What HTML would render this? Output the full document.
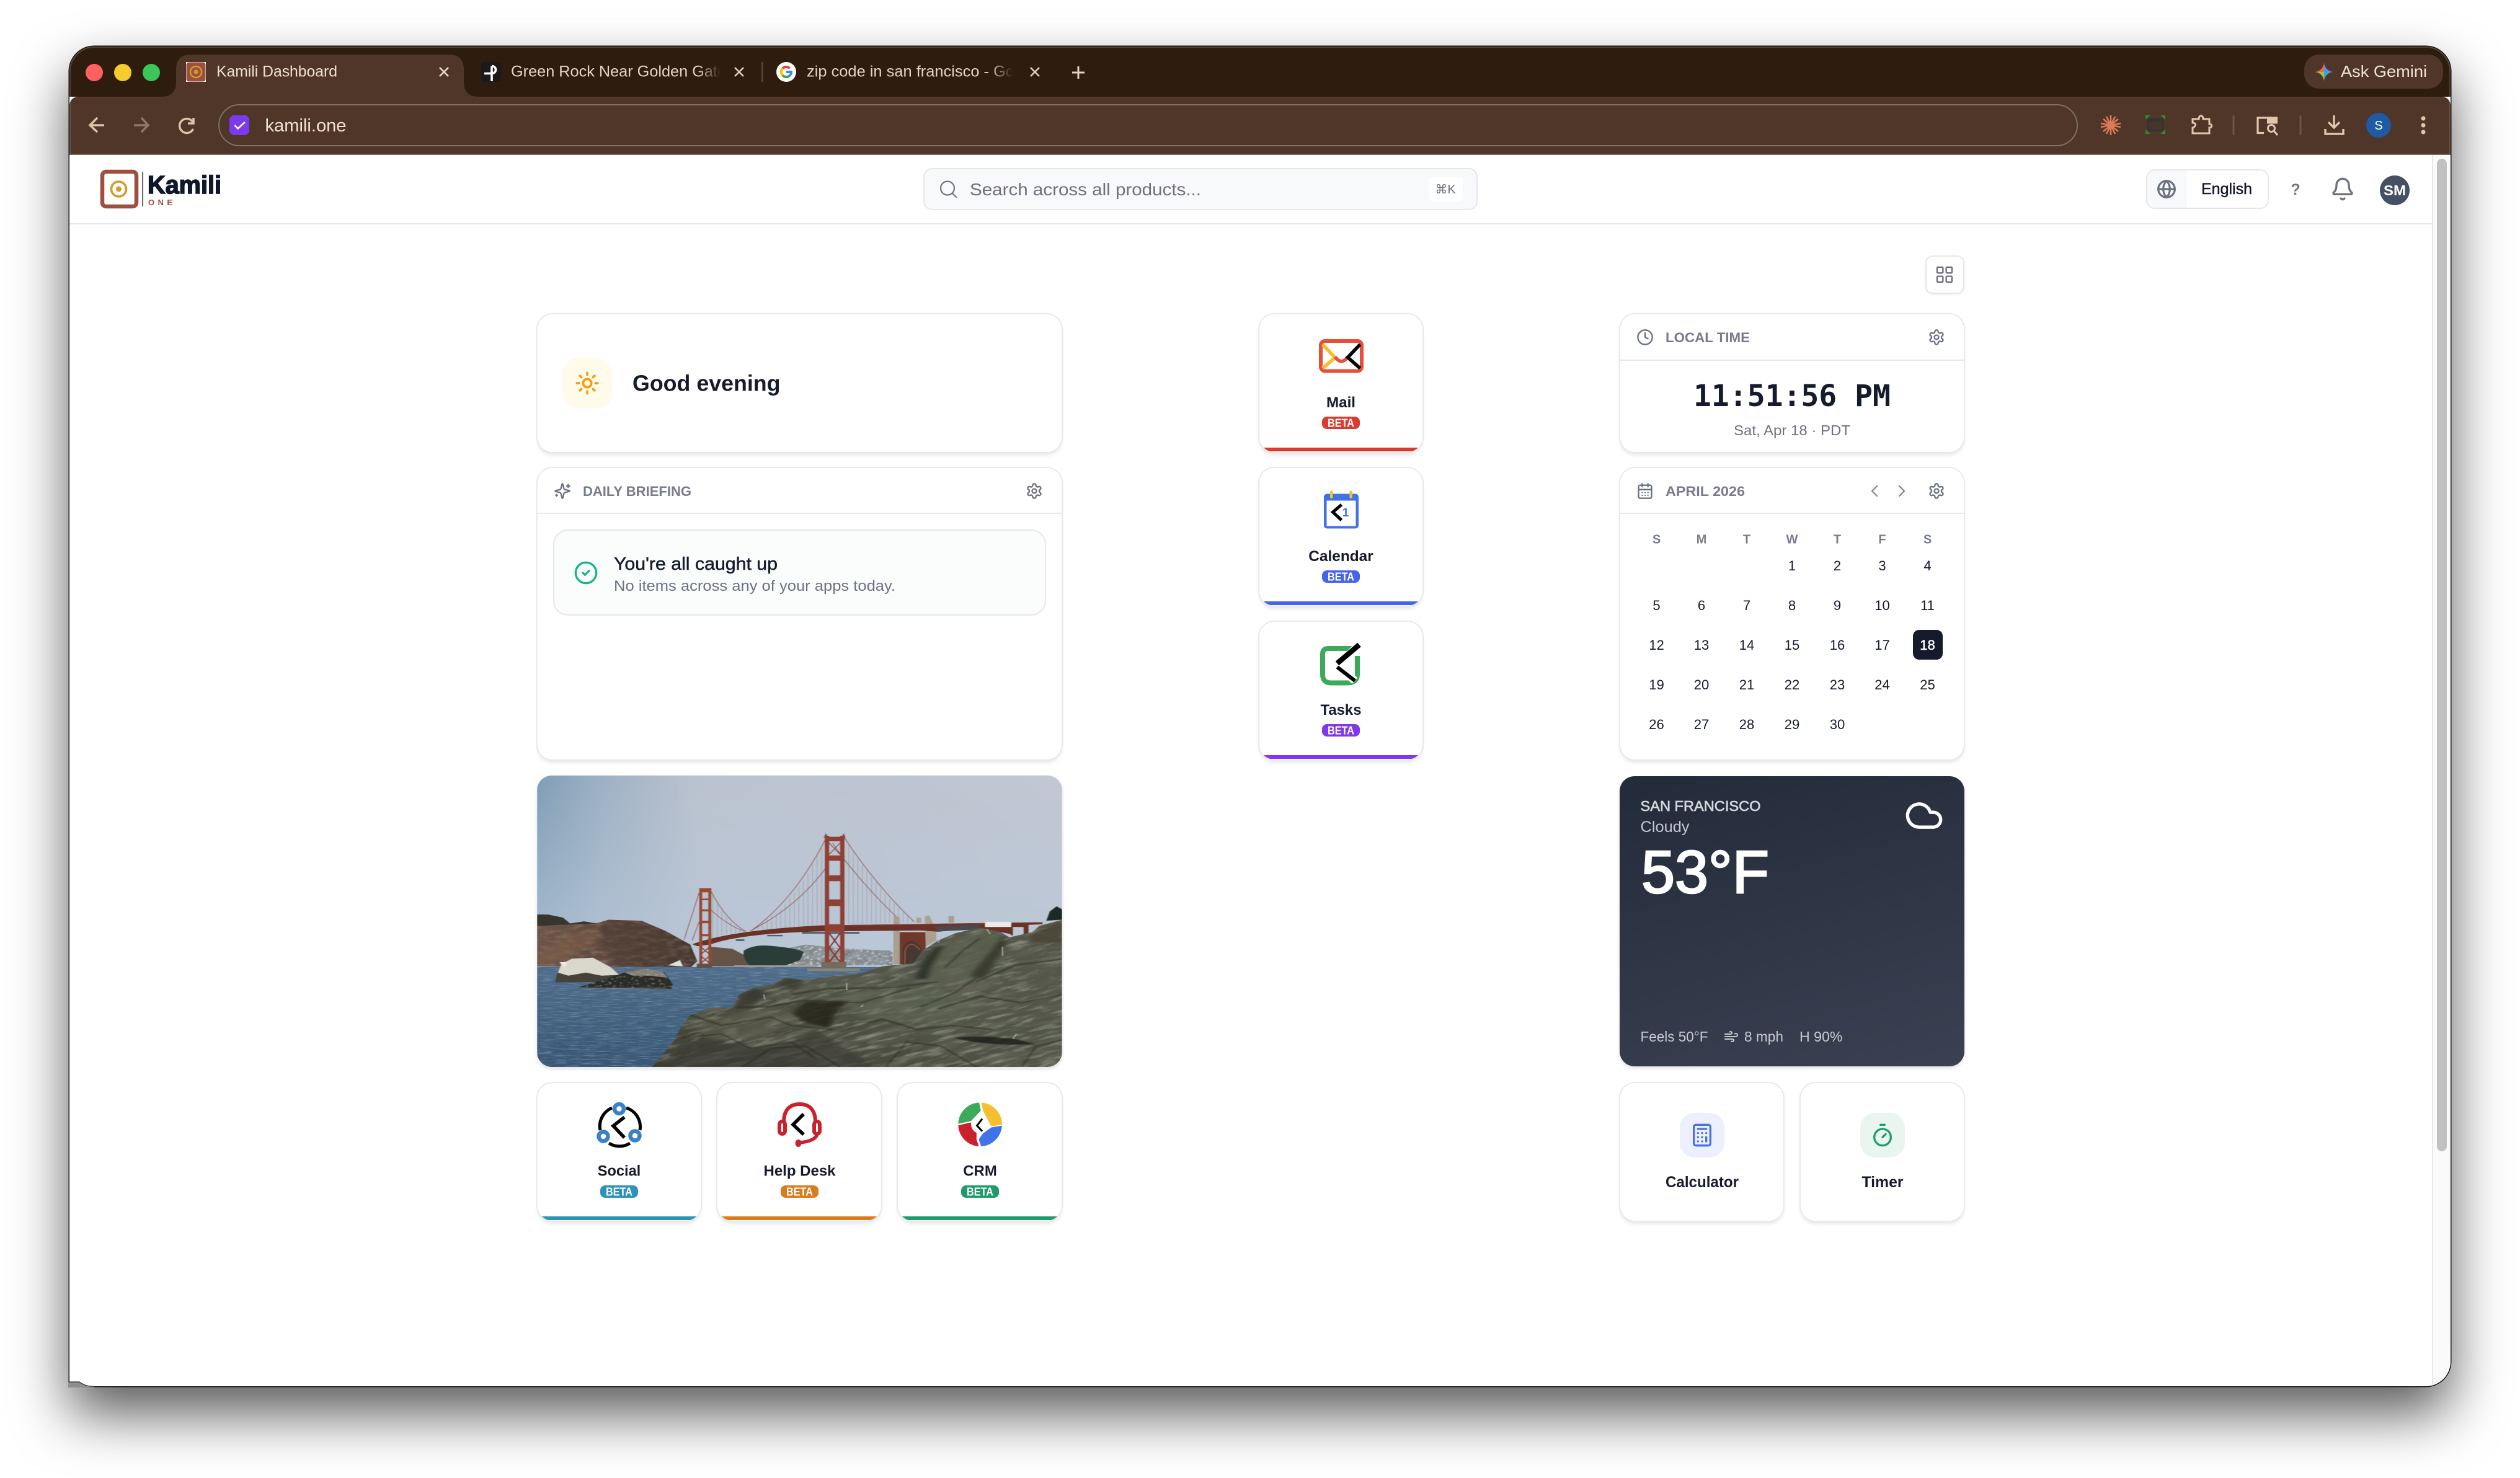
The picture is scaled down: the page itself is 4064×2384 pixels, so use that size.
<!DOCTYPE html>
<html lang="en"><head><meta charset="utf-8"><title>Kamili Dashboard</title>
<style>
html,body{margin:0;padding:0;width:4064px;height:2384px;background:#fff;overflow:hidden}
.win{position:absolute;left:112px;top:75px;width:3840px;height:2161px;border-radius:40px 40px 40px 0;background:#fff;overflow:hidden;box-shadow:0 0 0 1.5px #111,0 44px 90px rgba(0,0,0,.65)}
.pg{position:absolute;left:-112px;top:-75px;width:4064px;height:2384px}
.a{position:absolute;box-sizing:border-box}
.card{position:absolute;box-sizing:border-box;background:#fff;border:0;border-radius:24px;box-shadow:0 0 0 2px #E8E9ED,0 5px 7px rgba(0,0,0,.1);overflow:hidden}
.bar{position:absolute;left:0;right:0;bottom:1px;height:6px}
.pill{position:absolute;height:20px;border-radius:8px}
svg text{font-family:"Liberation Sans",sans-serif;white-space:pre}
.b{font-weight:700}
.ink{fill:#141B2D}.gr{fill:#6B7280}.lb{fill:#767C8B}
.m{stroke-width:.5px}
.ink.m{stroke:#141B2D}.gr.m{stroke:#6B7280}
.w{fill:#fff}
</style></head><body>
<div class="win"><div class="pg">
  <!-- browser chrome -->
  <div class="a" style="left:112px;top:75px;width:3840px;height:81px;background:#2E1D0E"></div>
  <div class="a" style="left:112px;top:156px;width:3840px;height:94px;background:#4F3628;border-radius:14px 14px 0 0"></div>
  <div class="a" style="left:112px;top:248px;width:3840px;height:2px;background:#5E4E44"></div>
  <div class="a" style="left:112px;top:75px;width:3840px;height:175px;border-radius:40px 40px 0 0;box-shadow:inset 0 0 0 2px rgba(255,255,255,.16)"></div>
  <div class="a" style="left:352px;top:168px;width:2999px;height:68px;border:2.5px solid #7E7066;border-radius:34px"></div>
  <div class="a" style="left:3716px;top:88px;width:224px;height:55px;background:#4F3628;border-radius:24px"></div>

  <!-- app header -->
  <div class="a" style="left:112px;top:360px;width:3811px;height:2px;background:#E7E8EF"></div>
  <div class="a" style="left:1489px;top:271px;width:894px;height:68px;background:#F8F9FB;border:2px solid #E5E7EB;border-radius:14px"></div>
  <div class="a" style="left:2304px;top:285px;width:55px;height:40px;background:#fff;border-radius:8px"></div>
  <div class="a" style="left:3461px;top:273px;width:198px;height:64px;background:#fff;border:2px solid #E5E7EB;border-radius:14px;overflow:hidden"><div style="width:64px;height:100%;background:#F8F9FB"></div></div>
  <div class="a" style="left:3105px;top:412px;width:63px;height:62px;background:#fff;border:2px solid #E5E7EB;border-radius:12px;box-shadow:0 2px 3px rgba(0,0,0,.06)"></div>

  <!-- scrollbar -->
  <div class="a" style="left:3922px;top:250px;width:30px;height:1986px;background:#FAFAFA;border-left:2px solid #E8E8E8"></div>
  <div class="a" style="left:3930px;top:256px;width:16px;height:1601px;background:#C1C1C1;border-radius:8px"></div>

  <!-- left column -->
  <div class="card" style="left:867px;top:507px;width:845px;height:222px"></div>
  <div class="a" style="left:907px;top:578px;width:80px;height:80px;background:#FFFBEB;border-radius:24px"></div>
  <div class="card" style="left:867px;top:755px;width:845px;height:470px"></div>
  <div class="a" style="left:867px;top:827px;width:845px;height:2px;background:#E7E8EC"></div>
  <div class="a" style="left:892px;top:854px;width:795px;height:139px;background:#FBFDFD;border:2px solid #E5E7EB;border-radius:24px"></div>

  <!-- photo -->
  <div class="a" style="left:866px;top:1251px;width:847px;height:470px;border-radius:24px;overflow:hidden;box-shadow:0 0 0 1px #F1F1F4,0 3px 6px rgba(0,0,0,.14)">
  <svg width="847" height="470" viewBox="30 35 1506 1405" preserveAspectRatio="none" style="display:block">
    <defs>
      <linearGradient id="sk" x1="0" x2="1" y1="0" y2="0"><stop offset="0" stop-color="#7F9DB6"/><stop offset=".12" stop-color="#9DB0C3"/><stop offset=".3" stop-color="#BAC2CF"/><stop offset="1" stop-color="#C2C7D3"/></linearGradient>
      <linearGradient id="sk2" x1="0" x2="0" y1="0" y2="1"><stop offset="0" stop-color="#B7C7D8" stop-opacity="0"/><stop offset="1" stop-color="#B8C8D9" stop-opacity=".85"/></linearGradient>
      <linearGradient id="wt" x1="0" x2="0" y1="0" y2="1"><stop offset="0" stop-color="#4E6C8A"/><stop offset=".4" stop-color="#42627F"/><stop offset="1" stop-color="#355472"/></linearGradient>
      <linearGradient id="rk" x1="0" x2="1" y1="1" y2="0"><stop offset="0" stop-color="#3E3F33"/><stop offset=".5" stop-color="#505447"/><stop offset="1" stop-color="#54584A"/></linearGradient>
      <linearGradient id="hl" x1="0" x2="1" y1="0" y2="0"><stop offset="0" stop-color="#6C5447"/><stop offset=".5" stop-color="#5E473C"/><stop offset="1" stop-color="#463830"/></linearGradient>
      <filter id="wd" x="0" y="0" width="1" height="1"><feTurbulence type="fractalNoise" baseFrequency=".014 .13" numOctaves="4" seed="4"/><feColorMatrix values="0 0 0 0 .1 0 0 0 0 .17 0 0 0 0 .28 2.4 0 0 0 -1"/></filter>
      <filter id="wl" x="0" y="0" width="1" height="1"><feTurbulence type="fractalNoise" baseFrequency=".025 .22" numOctaves="3" seed="9"/><feColorMatrix values="0 0 0 0 .72 0 0 0 0 .8 0 0 0 0 .88 2.6 0 0 0 -1.3"/></filter>
      <filter id="rd" x="0" y="0" width="1" height="1"><feTurbulence type="fractalNoise" baseFrequency=".006 .03" numOctaves="6" seed="11"/><feColorMatrix values="0 0 0 0 .12 0 0 0 0 .12 0 0 0 0 .09 3.2 0 0 0 -1.45"/></filter>
      <filter id="rl" x="0" y="0" width="1" height="1"><feTurbulence type="fractalNoise" baseFrequency=".014 .06" numOctaves="6" seed="23"/><feColorMatrix values="0 0 0 0 .52 0 0 0 0 .54 0 0 0 0 .44 3 0 0 0 -1.5"/></filter>
      <filter id="hn" x="0" y="0" width="1" height="1"><feTurbulence type="fractalNoise" baseFrequency=".03 .05" numOctaves="5" seed="5"/><feColorMatrix values="0 0 0 0 .2 0 0 0 0 .14 0 0 0 0 .11 2.6 0 0 0 -1.1"/></filter>
      <filter id="sp" x="0" y="0" width="1" height="1"><feTurbulence type="fractalNoise" baseFrequency=".09" numOctaves="3" seed="2"/><feColorMatrix values="0 0 0 0 .85 0 0 0 0 .84 0 0 0 0 .78 4 0 0 0 -2.1"/></filter>
      <filter id="f1"><feGaussianBlur stdDeviation="1.4 .8"/></filter>
      <filter id="f2"><feGaussianBlur stdDeviation="3 1.5"/></filter>
      <filter id="f5"><feGaussianBlur stdDeviation="8 5"/></filter>
      <clipPath id="rc"><path d="M360,1440 L420,1320 L445,1240 L470,1190 L530,1155 L592,1155 L610,1090 L650,1060 L710,1040 L740,1010 L800,1020 L900,1000 L955,990 L1020,955 L1110,940 L1135,880 L1180,830 L1230,795 L1300,768 L1360,790 L1385,815 L1450,790 L1470,760 L1536,730 V1440Z"/></clipPath>
      <clipPath id="hc"><path d="M30,745 L100,748 L120,752 L205,745 L235,730 L330,735 L400,785 L470,850 L490,930 L470,962 L30,955Z"/></clipPath>
      <clipPath id="sr"><path d="M150,1055 L200,1030 L280,985 L340,965 L395,985 L420,1040 L415,1065 L250,1060Z"/></clipPath>
      <clipPath id="tc"><path d="M740,870 L800,850 L900,868 L1050,880 V950 L760,950Z"/></clipPath>
      <pattern id="hg" width="13" height="10" patternUnits="userSpaceOnUse"><rect width="2" height="10" fill="#7B5A52" opacity=".35"/></pattern>
    </defs>
    <g filter="url(#f1)">
    <rect x="30" y="35" width="1506" height="1405" fill="url(#sk)"/>
    <rect x="30" y="35" width="1506" height="1000" fill="url(#sk2)"/>
    <!-- far hills -->
    <path d="M525,860 L590,870 L630,905 L650,955 L525,955Z" fill="#655347"/>
    <path d="M740,870 L800,850 L900,868 L1050,880 V950 L760,950Z" fill="#8A959D"/>
    <g clip-path="url(#tc)"><rect x="740" y="850" width="320" height="105" filter="url(#sp)" opacity=".8"/><rect x="740" y="850" width="320" height="105" filter="url(#hn)" opacity=".5"/></g>
    <path d="M622,880 Q650,848 700,856 Q770,866 795,885 L785,925 L740,952 L640,952 Q620,920 622,880Z" fill="#2B3C39"/>
    <rect x="595" y="950" width="240" height="12" fill="#A69D92"/>
    <!-- left headland -->
    <path d="M30,745 L100,748 L120,752 L205,745 L235,730 L330,735 L400,785 L470,850 L490,930 L470,962 L30,955Z" fill="url(#hl)"/>
    <g clip-path="url(#hc)">
      <rect x="30" y="720" width="480" height="250" filter="url(#hn)"/>
      <path d="M215,745 L240,735 L330,738 L390,790 L450,850 L470,930 L440,958 L270,958 L235,900 L215,820Z" fill="#4B3A32" opacity=".55" filter="url(#f5)"/>
      <path d="M30,900 L110,810 L205,760 L200,830 L120,920 L30,955Z" fill="#80604A" opacity=".5" filter="url(#f5)"/>
    </g>
    <path d="M30,705 L62,705 L105,720 L125,748 L165,738 L200,748 L30,760Z" fill="#38342E"/>
    <path d="M405,950 L440,925 L448,955Z" fill="#DEDEDA"/>
    <!-- water -->
    <rect x="30" y="958" width="1100" height="482" fill="url(#wt)"/>
    <rect x="30" y="958" width="1100" height="482" filter="url(#wd)" opacity=".65"/>
    <rect x="30" y="958" width="1100" height="482" filter="url(#wl)" opacity=".3"/>
    <!-- cables -->
    <polygon points="858,340 800,530 730,680 645,782 700,775 850,755" fill="url(#hg)"/>
    <polygon points="912,340 960,460 1040,630 1112,742 912,750" fill="url(#hg)"/>
    <polygon points="530,595 555,680 590,750 630,787 560,805 530,830" fill="url(#hg)"/>
    <g fill="none" stroke="#91483A" stroke-width="2.400">
      <path d="M858,340 C800,530 730,680 645,782"/><path d="M856,485 C810,590 740,700 640,785"/>
      <path d="M530,595 C555,680 590,750 630,787"/><path d="M530,685 C560,730 590,765 625,787"/>
      <path d="M912,335 C960,460 1040,630 1112,740"/><path d="M878,360 C920,470 1000,620 1060,715"/>
      <path d="M495,600 C480,680 465,760 452,825"/><path d="M495,740 L475,830"/>
    </g>
    <!-- anchors behind deck -->
    <path d="M1052,715 L1060,712 L1070,718 V945 H1052Z" fill="#A89F92"/>
    <path d="M1070,790 H1145 V880 L1120,945 H1070Z" fill="#6F382A"/>
    <path d="M1078,945 V870 Q1100,795 1135,870 L1120,945Z" fill="#463833"/>
    <path d="M1085,945 V880 Q1100,820 1128,875" fill="none" stroke="#93503D" stroke-width="4"/>
    <path d="M1142,715 L1155,708 L1165,745 L1175,790 V830 L1145,860Z" fill="#ABA193"/>
    <path d="M1118,720 H1132 V745 H1118ZM1210,712 H1226 V745 H1210Z" fill="#A89F92"/>
    <!-- deck -->
    <path d="M475,848 C560,796 700,770 850,757 L1480,742 L1480,752 L1390,758 V800 L1300,770 L1180,788 L1130,782 L850,786 C700,792 590,812 530,848 L490,858Z" fill="#6B3225"/>
    <path d="M860,757 L1480,742 V745 L860,761Z" fill="#8A4030"/>
    <path d="M1170,760 L1300,754 L1290,778 L1180,786Z" fill="#4C4A4C"/>
    <path d="M790,790 H955 V797 H790ZM600,825 H625 V832 H600ZM690,804 H735 V810 H690Z" fill="#3C5060"/>
    <path d="M1315,740 H1390 V765 H1315Z" fill="#EAEAEA"/>
    <path d="M1390,745 H1440 V800 H1425 V765 H1395 V805 H1388Z" fill="#6B3225"/>
    <!-- second tower -->
    <g fill="#98482F"><rect x="495" y="578" width="9" height="380"/><rect x="521" y="578" width="9" height="380"/><rect x="495" y="578" width="35" height="20"/><rect x="495" y="628" width="35" height="8"/><rect x="495" y="680" width="35" height="10"/><rect x="495" y="735" width="35" height="12"/><rect x="495" y="800" width="35" height="10"/></g>
    <path d="M497,858 L528,900 M528,858 L497,900 M497,900 L528,945 M528,900 L497,945" stroke="#8E3A2A" stroke-width="4" fill="none"/>
    <rect x="488" y="942" width="44" height="20" fill="#5E5148"/>
    <!-- main tower -->
    <g fill="#8E4130"><rect x="855" y="325" width="13" height="630"/><rect x="899" y="325" width="13" height="630"/><rect x="855" y="330" width="57" height="22"/><rect x="855" y="420" width="57" height="26"/><rect x="855" y="516" width="57" height="28"/><rect x="855" y="632" width="57" height="32"/><rect x="855" y="752" width="57" height="36"/></g>
    <path d="M858,312 L866,335 H852Z M910,312 L915,335 H902Z" fill="#8E4130"/>
    <path d="M868,360 L899,415 M899,360 L868,415" stroke="#8E4130" stroke-width="3" fill="none"/>
    <path d="M868,795 L899,865 M899,795 L868,865 M868,865 L899,935 M899,865 L868,935" stroke="#833526" stroke-width="5" fill="none"/>
    <rect x="845" y="935" width="72" height="30" fill="#756A5F"/>
    <path d="M805,965 H955 V978 H805Z" fill="#87837A"/>
    <!-- small rocks -->
    <path d="M82,1032 L88,985 L100,945 L130,920 L190,915 L240,960 L268,998 L265,1030Z" fill="#454339"/>
    <path d="M90,985 L100,945 L130,918 L190,913 L240,958 L266,996 L215,1000 L170,985 L120,1000Z" fill="#DAD7CC"/>
    <path d="M95,935 L118,933 L108,960Z" fill="#ECEAE2"/>
    <path d="M150,1055 L200,1030 L280,985 L340,965 L395,985 L420,1040 L415,1065 L250,1060Z" fill="#2C2B27"/>
    <path d="M282,985 L340,965 L390,982 L405,1010 L350,1000 L305,1000Z" fill="#A09E92" opacity=".75"/>
    <g clip-path="url(#sr)"><rect x="145" y="960" width="280" height="110" filter="url(#sp)" opacity=".3"/></g>
    <path d="M230,1060 H400" stroke="#C9D2DA" stroke-width="3" opacity=".55"/>
    <!-- foreground rock -->
    <g clip-path="url(#rc)">
      <rect x="340" y="720" width="1210" height="730" fill="url(#rk)"/>
      <g transform="rotate(-24 900 1100)"><rect x="100" y="300" width="1700" height="1600" filter="url(#rd)"/><rect x="100" y="300" width="1700" height="1600" filter="url(#rl)" opacity=".42"/></g>
      <g filter="url(#f5)">
        <path d="M1130,1010 L1180,870 L1320,775 L1365,800 L1350,880 L1290,1010 L1170,1060Z" fill="#596150" opacity=".7"/>
        <path d="M1115,1015 L1135,930 L1175,860 L1200,850 L1160,960 L1150,1020Z" fill="#2B2E25" opacity=".85"/>
        <path d="M1270,1000 L1340,860 L1365,800 L1375,850 L1310,1020Z" fill="#36362A" opacity=".8"/>
        <path d="M1440,800 L1536,740 V840 L1450,840Z" fill="#4A4132" opacity=".8"/>
        <path d="M760,1180 L800,1125 H930 L890,1170 L870,1255 L790,1220Z" fill="#242419" opacity=".85"/>
        <path d="M595,1155 L620,1090 L660,1060 L690,1090 L640,1150Z" fill="#36362B" opacity=".8"/>
        <path d="M710,1040 L745,1010 L800,1025 L770,1065Z" fill="#3A3B30" opacity=".8"/>
        <path d="M360,1440 L500,1300 L700,1360 L830,1260 L1000,1440Z" fill="#3C3D32" opacity=".7"/>
        <path d="M470,1240 L620,1170 L740,1160 L780,1230 L650,1300 L520,1300Z" fill="#5F5E4D" opacity=".5"/>
        <path d="M900,1100 L1150,1050 L1330,1140 L1200,1240 L950,1200Z" fill="#656B5A" opacity=".4"/>
      </g>
      <path d="M1225,1300 Q1290,1285 1400,1305 L1460,1330 Q1320,1340 1225,1300Z" fill="#20211B" opacity=".85" filter="url(#f2)"/>
      <g fill="none" stroke="#26271E" stroke-width="5" opacity=".6" filter="url(#f2)">
        <path d="M470,1190 L560,1240 L700,1200 L760,1240 L880,1260"/><path d="M445,1300 L560,1280 L640,1350 L760,1320 L830,1400"/>
        <path d="M600,1155 L690,1150 L800,1120 L960,1130 L1100,1060"/><path d="M760,1090 L880,1060 L1030,1060 L1180,1030"/>
        <path d="M900,1270 L1020,1210 L1120,1260 L1220,1240 L1340,1260"/><path d="M1030,1440 L1090,1320 L1190,1340 L1290,1440"/>
        <path d="M1180,1160 L1300,1100 L1420,1130 L1536,1090"/><path d="M1290,1030 L1400,950 L1536,920"/>
        <path d="M1420,1440 L1460,1340 L1536,1310"/><path d="M1130,1150 L1230,1080 L1290,1010"/>
        <path d="M620,1440 L700,1350 L800,1340 L900,1440"/><path d="M1200,960 L1250,880 L1300,820"/>
      </g>
      <g fill="none" stroke="#7A7D6C" stroke-width="4" opacity=".4" filter="url(#f2)">
        <path d="M480,1180 L570,1225 L700,1185 L770,1225"/><path d="M620,1140 L700,1135 L810,1105 L960,1115"/>
        <path d="M910,1255 L1020,1195 L1120,1245 L1220,1225"/><path d="M1190,1145 L1300,1085 L1420,1115"/>
        <path d="M1300,1015 L1400,935 L1536,905"/><path d="M770,1075 L880,1045 L1030,1045"/>
      </g>
      <g stroke="#D8D6CC" stroke-width="3" opacity=".7" fill="none"><path d="M1320,775 L1330,800"/><path d="M1365,860 V905"/><path d="M680,1090 L684,1115"/><path d="M965,1140 L960,1150"/><path d="M1405,1280 L1395,1305"/><path d="M1185,825 L1180,840"/><path d="M918,1035 V1070"/></g>
    </g>
    <path d="M1490,735 L1500,690 L1520,665 L1536,680 V730Z" fill="#1F2A28"/>
    </g>
  </svg></div>

  <!-- bottom app row -->
  <div class="card" style="left:867px;top:1747px;width:263px;height:222px"><div class="bar" style="background:#2F93B8"></div></div>
  <div class="card" style="left:1157px;top:1747px;width:264px;height:222px"><div class="bar" style="background:#D97C1E"></div></div>
  <div class="card" style="left:1448px;top:1747px;width:264px;height:222px"><div class="bar" style="background:#1F9A6B"></div></div>
  <div class="pill" style="left:968px;top:1912px;width:61px;background:#2F93B8"></div>
  <div class="pill" style="left:1259px;top:1912px;width:61px;background:#D97C1E"></div>
  <div class="pill" style="left:1550px;top:1912px;width:61px;background:#1F9A6B"></div>

  <!-- middle column -->
  <div class="card" style="left:2031px;top:507px;width:263px;height:222px"><div class="bar" style="background:#D93A32"></div></div>
  <div class="card" style="left:2031px;top:755px;width:263px;height:222px"><div class="bar" style="background:#4564E8"></div></div>
  <div class="card" style="left:2031px;top:1003px;width:263px;height:222px"><div class="bar" style="background:#8038EA"></div></div>
  <div class="pill" style="left:2132px;top:672px;width:61px;background:#D93A32"></div>
  <div class="pill" style="left:2132px;top:920px;width:61px;background:#4564E8"></div>
  <div class="pill" style="left:2132px;top:1168px;width:61px;background:#8038EA"></div>

  <!-- right column -->
  <div class="card" style="left:2613px;top:507px;width:554px;height:222px"></div>
  <div class="a" style="left:2613px;top:580px;width:554px;height:2px;background:#E7E8EC"></div>
  <div class="card" style="left:2613px;top:755px;width:554px;height:470px"></div>
  <div class="a" style="left:2613px;top:827px;width:554px;height:2px;background:#E7E8EC"></div>
  <div class="a" style="left:3085px;top:1016px;width:48px;height:48px;background:#141B2D;border-radius:10px"></div>
  <div class="a" style="left:2612px;top:1252px;width:556px;height:468px;border-radius:24px;background:linear-gradient(165deg,#232B3A,#3A4152);box-shadow:0 3px 6px rgba(0,0,0,.12)"></div>
  <div class="card" style="left:2613px;top:1747px;width:263px;height:222px"></div>
  <div class="card" style="left:2904px;top:1747px;width:263px;height:222px"></div>
  <div class="a" style="left:2709px;top:1795px;width:72px;height:72px;background:#ECF0FC;border-radius:24px"></div>
  <div class="a" style="left:3000px;top:1795px;width:72px;height:72px;background:#EBF5F0;border-radius:24px"></div>

  <!-- text and icons -->
  <svg class="a" style="left:0;top:0" width="4064" height="2384" viewBox="0 0 4064 2384">
    <defs>
      <symbol id="gear" viewBox="0 0 24 24"><path d="M12.22 2h-.44a2 2 0 0 0-2 2v.18a2 2 0 0 1-1 1.73l-.43.25a2 2 0 0 1-2 0l-.15-.08a2 2 0 0 0-2.73.73l-.22.38a2 2 0 0 0 .73 2.73l.15.1a2 2 0 0 1 1 1.72v.51a2 2 0 0 1-1 1.74l-.15.09a2 2 0 0 0-.73 2.73l.22.38a2 2 0 0 0 2.73.73l.15-.08a2 2 0 0 1 2 0l.43.25a2 2 0 0 1 1 1.73V20a2 2 0 0 0 2 2h.44a2 2 0 0 0 2-2v-.18a2 2 0 0 1 1-1.73l.43-.25a2 2 0 0 1 2 0l.15.08a2 2 0 0 0 2.73-.73l.22-.39a2 2 0 0 0-.73-2.73l-.15-.08a2 2 0 0 1-1-1.74v-.5a2 2 0 0 1 1-1.74l.15-.09a2 2 0 0 0 .73-2.73l-.22-.38a2 2 0 0 0-2.73-.73l-.15.08a2 2 0 0 1-2 0l-.43-.25a2 2 0 0 1-1-1.73V4a2 2 0 0 0-2-2z"/><circle cx="12" cy="12" r="3"/></symbol>
      <linearGradient id="fd2" gradientUnits="userSpaceOnUse" x1="1125" x2="1162" y1="0" y2="0"><stop offset="0" stop-color="#E6D2C3"/><stop offset="1" stop-color="#E6D2C3" stop-opacity="0"/></linearGradient>
      <linearGradient id="fd3" gradientUnits="userSpaceOnUse" x1="1595" x2="1634" y1="0" y2="0"><stop offset="0" stop-color="#E6D2C3"/><stop offset="1" stop-color="#E6D2C3" stop-opacity="0"/></linearGradient>
      <clipPath id="star"><path d="M3748,101.5 Q3750,114 3762.5,116 Q3750,118 3748,130.5 Q3746,118 3733.5,116 Q3746,114 3748,101.5Z"/></clipPath>
    </defs>

    <!-- active tab -->
    <path d="M260,156 Q284,156 284,132 V112 Q284,88 308,88 H724 Q748,88 748,112 V132 Q748,156 772,156Z" fill="#4F3628"/>
    <!-- traffic lights -->
    <circle cx="152" cy="117" r="14" fill="#FE6160"/><circle cx="198" cy="117" r="14" fill="#F6CB2C"/><circle cx="244" cy="117" r="14" fill="#3BC65A"/>
    <!-- tab 1 -->
    <rect x="300" y="100" width="32" height="32" fill="#fff"/><rect x="300.5" y="100.5" width="31" height="31" rx="4" fill="#9E4F3F"/>
    <circle cx="316" cy="116" r="9" fill="none" stroke="#D29B2A" stroke-width="2.5"/><circle cx="316" cy="116" r="3.5" fill="#D29B2A"/>
    <text x="349" y="123.5" font-size="25" textLength="195" lengthAdjust="spacingAndGlyphs" fill="#F0E0D4">Kamili Dashboard</text>
    <path d="M709,109 L723,123 M723,109 L709,123" stroke="#F0E0D4" stroke-width="2.5"/>
    <!-- tab 2 -->
    <rect x="776" y="100" width="32" height="32" rx="4" fill="#1A1A1A"/>
    <path d="M793,131 V107 M793,106.5 A6.5,6 0 0 1 793,118.5 H781" fill="none" stroke="#fff" stroke-width="3.6"/>
    <text x="824" y="123.5" font-size="25" textLength="347" lengthAdjust="spacingAndGlyphs" fill="url(#fd2)">Green Rock Near Golden Gate</text>
    <path d="M1185,109 L1199,123 M1199,109 L1185,123" stroke="#E6D2C3" stroke-width="2.5"/>
    <rect x="1228" y="100" width="2.5" height="32" fill="#5E4433"/>
    <!-- tab 3 -->
    <circle cx="1268" cy="116" r="16" fill="#fff"/>
    <g fill="none" stroke-width="4"><path d="M1262.3,110.3 A8,8 0 0 1 1273.7,110.3" stroke="#EA4335"/><path d="M1262.3,110.3 A8,8 0 0 0 1262.3,121.7" stroke="#FBBC05"/><path d="M1262.3,121.7 A8,8 0 0 0 1273.7,121.7" stroke="#34A853"/><path d="M1273.7,121.7 A8,8 0 0 0 1276,116 H1268" stroke="#4285F4"/></g>
    <text x="1301" y="123.5" font-size="25" textLength="335" lengthAdjust="spacingAndGlyphs" fill="url(#fd3)">zip code in san francisco - Go</text>
    <path d="M1662,109 L1676,123 M1676,109 L1662,123" stroke="#E6D2C3" stroke-width="2.5"/>
    <path d="M1739,107 V127 M1729,117 H1749" stroke="#E6D2C3" stroke-width="3"/>
    <!-- gemini -->
    <g clip-path="url(#star)"><rect x="3730" y="100" width="18" height="16" fill="#E86B4A"/><rect x="3748" y="100" width="18" height="16" fill="#5A8CF0"/><rect x="3730" y="116" width="18" height="16" fill="#9CC24A"/><rect x="3748" y="116" width="18" height="16" fill="#3DA5C8"/></g>
    <text x="3775" y="124" font-size="26" textLength="139" lengthAdjust="spacingAndGlyphs" fill="#F0E2D8">Ask Gemini</text>

    <!-- nav -->
    <g fill="none" stroke="#DFC2AB" stroke-width="3.5">
      <path d="M168,202 H147 M157,190 L145,202 L157,213"/>
      <path d="M216,202 H237 M228,190 L239,202 L228,213" stroke="#8F7868"/>
      <path d="M311,197 A11.5,11.5 0 1 0 311.5,208"/><path d="M312,190 V199 H303"/>
    </g>
    <path d="M375,186 H397 L402,191 V213 L397,218 H375 L370,213 V191Z" fill="#7C3AED"/>
    <path d="M378.5,202 L383.5,207.5 L395,197" fill="none" stroke="#fff" stroke-width="2.6"/>
    <text x="427.5" y="212" font-size="29" textLength="131" lengthAdjust="spacingAndGlyphs" fill="#F2E3D8">kamili.one</text>

    <!-- toolbar right -->
    <g stroke="#DD7A57" stroke-width="2.6" transform="translate(3404 202)"><path d="M0,-16 L0,16 M-7,-14 L7,14 M7,-14 L-7,14 M-12,-10 L12,10 M12,-10 L-12,10 M-16,-3 L16,3 M16,-3 L-16,3"/></g>
    <path d="M3460,186 H3468 L3460,193Z M3492,186 H3484 L3492,193Z M3460,216 H3468 L3460,209Z M3492,216 H3484 L3492,209Z" fill="#2E8B2E"/>
    <rect x="3464" y="192" width="24" height="18" rx="2" fill="#45352B" stroke="#333" stroke-width="2.5"/><rect x="3464" y="191" width="24" height="5" fill="#333"/>
    <path d="M3536,192 H3546 C3546,185 3553,185 3553,192 H3563 V200 C3568,200 3568,206 3563,206 V215 H3536 V206 C3542,204 3542,198 3536,198Z" fill="none" stroke="#E3C5AE" stroke-width="3"/>
    <rect x="3600.5" y="186" width="3" height="32" rx="1.5" fill="#6E5546"/>
    <path d="M3664,190 H3641 V214.500 H3651" fill="none" stroke="#E3C5AE" stroke-width="3.2"/><rect x="3656" y="188.500" width="17" height="11" fill="#E3C5AE"/>
    <circle cx="3663" cy="207" r="5.500" fill="none" stroke="#E3C5AE" stroke-width="3"/><path d="M3667,211 L3673,218" stroke="#E3C5AE" stroke-width="3"/>
    <rect x="3708.5" y="186" width="3" height="32" rx="1.5" fill="#6E5546"/>
    <path d="M3764,186 V205 M3755,197 L3764,206 L3773,197 M3750,208 V216 H3779 V208" fill="none" stroke="#E3C5AE" stroke-width="3.4"/>
    <circle cx="3836" cy="202" r="20" fill="#1F5AA6"/><text x="3836" y="209" font-size="20" text-anchor="middle" class="w">S</text>
    <circle cx="3908" cy="191" r="3.500" fill="#E3C5AE"/><circle cx="3908" cy="202" r="3.500" fill="#E3C5AE"/><circle cx="3908" cy="213" r="3.500" fill="#E3C5AE"/>

    <!-- logo -->
    <rect x="165" y="277" width="55" height="56" rx="6" fill="#fff" stroke="#A04F3F" stroke-width="6.500"/>
    <circle cx="191.500" cy="305" r="12" fill="none" stroke="#D29B2A" stroke-width="3.600"/><circle cx="191.500" cy="305" r="4.500" fill="#D29B2A"/>
    <rect x="229.500" y="277" width="1.500" height="56" fill="#141B2D"/>
    <text x="238" y="312" font-size="41" class="b" textLength="119" lengthAdjust="spacingAndGlyphs" fill="#0F172A" stroke="#0F172A" stroke-width="1.600">Kamili</text>
    <text x="239" y="331" font-size="13" class="b" textLength="39" fill="#A04F3F">ONE</text>

    <!-- search -->
    <g fill="none" stroke="#6B7280" stroke-width="2.200" stroke-linecap="round"><circle cx="1528" cy="303.500" r="11"/><path d="M1536,312 L1542,318"/></g>
    <text x="1564" y="315" font-size="28" textLength="373" lengthAdjust="spacingAndGlyphs" class="gr">Search across all products...</text>
    <text x="2331" y="312" font-size="20" text-anchor="middle" class="gr">⌘K</text>

    <!-- header right -->
    <g fill="none" stroke="#6B7280" stroke-width="2.400" transform="translate(3478 289) scale(1.333)" stroke-linecap="round"><circle cx="12" cy="12" r="10"/><path d="M12 2a14.500 14.500 0 0 0 0 20 14.500 14.500 0 0 0 0-20"/><path d="M2 12h20"/></g>
    <text x="3550" y="313" font-size="25" textLength="82" lengthAdjust="spacingAndGlyphs" class="ink m">English</text>
    <text x="3702" y="314" font-size="25" text-anchor="middle" class="gr b">?</text>
    <g fill="none" stroke="#6B7280" stroke-width="2" stroke-linecap="round" stroke-linejoin="round" transform="translate(3758 285) scale(1.667)"><path d="M10.268 21a2 2 0 0 0 3.464 0"/><path d="M3.262 15.326A1 1 0 0 0 4 17h16a1 1 0 0 0 .74-1.673C19.41 13.956 18 12.499 18 8A6 6 0 0 0 6 8c0 4.499-1.411 5.956-2.738 7.326"/></g>
    <circle cx="3862" cy="307" r="24" fill="#465065"/><text x="3862" y="315" font-size="23" class="w b" text-anchor="middle" textLength="36" lengthAdjust="spacingAndGlyphs">SM</text>

    <!-- grid toggle -->
    <g fill="none" stroke="#6B7280" stroke-width="1.800" transform="translate(3120 427) scale(1.333)"><rect x="3" y="3" width="7" height="7" rx="1"/><rect x="14" y="3" width="7" height="7" rx="1"/><rect x="14" y="14" width="7" height="7" rx="1"/><rect x="3" y="14" width="7" height="7" rx="1"/></g>

    <!-- greeting -->
    <g fill="none" stroke="#F59E0B" stroke-width="2.200" stroke-linecap="round" transform="translate(927 598) scale(1.667)"><circle cx="12" cy="12" r="4"/><path d="M12 2v2M12 20v2M4.930 4.930l1.410 1.410M17.660 17.660l1.410 1.410M2 12h2M20 12h2M6.340 17.660l-1.410 1.410M19.070 4.930l-1.410 1.410"/></g>
    <text x="1020" y="630.500" font-size="36" class="ink b" textLength="238.500" lengthAdjust="spacingAndGlyphs">Good evening</text>

    <!-- briefing -->
    <g fill="none" stroke="#6B7280" stroke-width="2" stroke-linecap="round" stroke-linejoin="round" transform="translate(893 778) scale(1.167)"><path d="M9.937 15.500A2 2 0 0 0 8.500 14.063l-6.135-1.582a.5.5 0 0 1 0-.962L8.500 9.936A2 2 0 0 0 9.937 8.500l1.582-6.135a.5.5 0 0 1 .963 0L14.063 8.500A2 2 0 0 0 15.500 9.937l6.135 1.581a.5.5 0 0 1 0 .964L15.500 14.063a2 2 0 0 0-1.437 1.437l-1.582 6.135a.5.5 0 0 1-.963 0z"/><path d="M20 3v4M22 5h-4M4 17v2M5 18H3"/></g>
    <text x="940" y="800" font-size="22" class="lb b" textLength="175" lengthAdjust="spacingAndGlyphs">DAILY BRIEFING</text>
    <use href="#gear" x="1654" y="778" width="28" height="28" fill="none" stroke="#6B7280" stroke-width="2" stroke-linecap="round" stroke-linejoin="round"/>
    <g fill="none" stroke="#10B981" stroke-width="2" stroke-linecap="round" stroke-linejoin="round" transform="translate(925 904) scale(1.667)"><circle cx="12" cy="12" r="10"/><path d="M9 12l2 2 4-4"/></g>
    <text x="990" y="919" font-size="29" class="ink m" textLength="264" lengthAdjust="spacingAndGlyphs">You're all caught up</text>
    <text x="990" y="953" font-size="24.500" class="gr" textLength="454" lengthAdjust="spacingAndGlyphs">No items across any of your apps today.</text>

    <!-- Social -->
    <g transform="translate(962 1778)">
      <g fill="none" stroke="#000" stroke-width="5"><path d="M6,45 A32,32 0 0 1 25,9"/><path d="M48,9 A32,32 0 0 1 70,45"/><path d="M20,66 A32,32 0 0 0 54,66"/></g>
      <circle cx="36.500" cy="10.500" r="7.500" fill="#fff" stroke="#3B82C4" stroke-width="6.500"/>
      <circle cx="11" cy="55" r="7.500" fill="#fff" stroke="#3B82C4" stroke-width="6.500"/>
      <circle cx="62" cy="54" r="7.500" fill="#fff" stroke="#3B82C4" stroke-width="6.500"/>
      <path d="M45,24 L27,38 L45,57" fill="none" stroke="#000" stroke-width="5.500"/>
    </g>
    <text x="998.500" y="1896.500" font-size="24.500" class="ink b" text-anchor="middle" textLength="69.500" lengthAdjust="spacingAndGlyphs">Social</text>
    <!-- Help Desk -->
    <g transform="translate(1253 1778)" fill="none">
      <path d="M11,32 C11,12 21,3 36.500,3 C52,3 62,12 62,32" stroke="#C8232C" stroke-width="6"/>
      <rect x="4" y="31" width="9" height="20" rx="4.500" stroke="#C8232C" stroke-width="6"/>
      <rect x="60" y="31" width="9" height="20" rx="4.500" stroke="#C8232C" stroke-width="6"/>
      <path d="M65,51 C63,60 50,64 36,65" stroke="#C8232C" stroke-width="5.500"/>
      <ellipse cx="34.500" cy="66" rx="5" ry="6" fill="#C8232C"/>
      <path d="M43,19 L26,36 L43,52" stroke="#000" stroke-width="5.500"/>
    </g>
    <text x="1289.500" y="1896.500" font-size="24.500" class="ink b" text-anchor="middle" textLength="116" lengthAdjust="spacingAndGlyphs">Help Desk</text>
    <!-- CRM -->
    <g transform="translate(1580.600 1813.700)" stroke="#fff" stroke-width="1.500">
      <path d="M-36,0 A36,36 0 0 1 -1,-36 L2,-22 L-14,-5Z" fill="#3DA95B"/>
      <path d="M1,-36 A36,36 0 0 1 36,1 L18,5 L4,-22Z" fill="#F6BF2F"/>
      <path d="M36,1 A36,36 0 0 1 1,36 L-3,24 L4,14 L18,4Z" fill="#4272E8"/>
      <path d="M-1,36 A36,36 0 0 1 -36,1 L-15,-4 L-5,14 L-5,24Z" fill="#C8232C"/>
      <circle r="14.500" fill="#fff" stroke="none"/>
      <path d="M3.400,-9 L-5,2 L3.400,11" fill="none" stroke="#000" stroke-width="3"/>
    </g>
    <text x="1580.500" y="1896.500" font-size="24.500" class="ink b" text-anchor="middle" textLength="54.500" lengthAdjust="spacingAndGlyphs">CRM</text>
    <text x="998.500" y="1928.500" font-size="18" class="w b" text-anchor="middle" textLength="43" lengthAdjust="spacingAndGlyphs">BETA</text>
    <text x="1289.500" y="1928.500" font-size="18" class="w b" text-anchor="middle" textLength="43" lengthAdjust="spacingAndGlyphs">BETA</text>
    <text x="1580.500" y="1928.500" font-size="18" class="w b" text-anchor="middle" textLength="43" lengthAdjust="spacingAndGlyphs">BETA</text>

    <!-- Mail -->
    <rect x="2130" y="550" width="66" height="48.500" rx="7" fill="#fff" stroke="#E5503C" stroke-width="6"/>
    <path d="M2133,555.500 L2153,577 L2133,594" fill="none" stroke="#F9BC2C" stroke-width="5.500"/>
    <path d="M2153,575.500 Q2163.300,590 2173.500,575.500" fill="none" stroke="#E5503C" stroke-width="5.500"/>
    <path d="M2193.500,555.500 L2173.500,576.500 L2193.500,594" fill="none" stroke="#000" stroke-width="5.500"/>
    <text x="2162.500" y="657" font-size="24.500" class="ink b" text-anchor="middle" textLength="47" lengthAdjust="spacingAndGlyphs">Mail</text>
    <text x="2162.500" y="688.500" font-size="18" class="w b" text-anchor="middle" textLength="43" lengthAdjust="spacingAndGlyphs">BETA</text>
    <!-- Calendar -->
    <rect x="2135" y="796.500" width="56" height="56" rx="5" fill="#4272E8"/><rect x="2139.500" y="807.500" width="47" height="41" fill="#fff"/>
    <rect x="2145" y="791.500" width="4.500" height="12.500" rx="2.200" fill="#F6BF2F"/><rect x="2176.500" y="791.500" width="4.500" height="12.500" rx="2.200" fill="#F6BF2F"/>
    <path d="M2163.500,814 L2149.500,826 L2163.500,839" fill="none" stroke="#000" stroke-width="5"/>
    <text x="2170" y="833" font-size="19" class="b" text-anchor="middle" fill="#4272E8">1</text>
    <text x="2162.500" y="905" font-size="24.500" class="ink b" text-anchor="middle" textLength="104.500" lengthAdjust="spacingAndGlyphs">Calendar</text>
    <text x="2162.500" y="936.500" font-size="18" class="w b" text-anchor="middle" textLength="43" lengthAdjust="spacingAndGlyphs">BETA</text>
    <!-- Tasks -->
    <path d="M2182,1046 H2142 Q2133,1046 2133,1055 V1088 Q2133,1101.500 2147,1101.500 H2173 Q2189,1101.500 2189,1088 V1058" fill="none" stroke="#3DA95B" stroke-width="8"/>
    <path d="M2192,1040 L2157,1074 L2185,1098" fill="none" stroke="#fff" stroke-width="13"/>
    <path d="M2192,1040 L2156.500,1070" fill="none" stroke="#000" stroke-width="8.500"/><path d="M2156.500,1076 L2185,1098" fill="none" stroke="#000" stroke-width="6"/>
    <text x="2162.500" y="1153" font-size="24.500" class="ink b" text-anchor="middle" textLength="66" lengthAdjust="spacingAndGlyphs">Tasks</text>
    <text x="2162.500" y="1184.500" font-size="18" class="w b" text-anchor="middle" textLength="43" lengthAdjust="spacingAndGlyphs">BETA</text>

    <!-- Local time -->
    <g fill="none" stroke="#6B7280" stroke-width="2" stroke-linecap="round" stroke-linejoin="round" transform="translate(2639 530) scale(1.167)"><circle cx="12" cy="12" r="10"/><path d="M12 6v6l4 2"/></g>
    <text x="2686" y="552" font-size="22" class="lb b" textLength="136" lengthAdjust="spacingAndGlyphs">LOCAL TIME</text>
    <use href="#gear" x="3109" y="530" width="28" height="28" fill="none" stroke="#6B7280" stroke-width="2" stroke-linecap="round" stroke-linejoin="round"/>
    <text x="2731" y="655" font-size="48" font-weight="700" class="ink" style="font-family:'DejaVu Sans Mono','Liberation Mono',monospace">11:51:56 PM</text>
    <text x="2796" y="702" font-size="23" class="gr" textLength="188" lengthAdjust="spacingAndGlyphs">Sat, Apr 18 · PDT</text>

    <!-- Calendar widget -->
    <g fill="none" stroke="#6B7280" stroke-width="2" stroke-linecap="round" stroke-linejoin="round" transform="translate(2639 778) scale(1.167)"><path d="M8 2v4M16 2v4"/><rect x="3" y="4" width="18" height="18" rx="2"/><path d="M3 10h18M8 14h.01M12 14h.01M16 14h.01M8 18h.01M12 18h.01M16 18h.01"/></g>
    <text x="2686" y="800" font-size="22" class="lb b" textLength="128" lengthAdjust="spacingAndGlyphs">APRIL 2026</text>
    <path d="M3027,784 L3019,792 L3027,800 M3063,784 L3071,792 L3063,800" fill="none" stroke="#767C8B" stroke-width="2" stroke-linecap="round" stroke-linejoin="round"/>
    <use href="#gear" x="3109" y="778" width="28" height="28" fill="none" stroke="#6B7280" stroke-width="2" stroke-linecap="round" stroke-linejoin="round"/>
    <g font-size="20" class="b" text-anchor="middle" fill="#767C8B">
      <text x="2671.500" y="876.500">S</text><text x="2744" y="876.500">M</text><text x="2817" y="876.500">T</text><text x="2890" y="876.500">W</text><text x="2963" y="876.500">T</text><text x="3035.500" y="876.500">F</text><text x="3108.500" y="876.500">S</text>
    </g>
    <g font-size="22" text-anchor="middle" fill="#141B2D">
      <text x="2890" y="920">1</text><text x="2963" y="920">2</text><text x="3035.500" y="920">3</text><text x="3108.500" y="920">4</text>
      <text x="2671.500" y="984">5</text><text x="2744" y="984">6</text><text x="2817" y="984">7</text><text x="2890" y="984">8</text><text x="2963" y="984">9</text><text x="3035.500" y="984">10</text><text x="3108.500" y="984">11</text>
      <text x="2671.500" y="1048">12</text><text x="2744" y="1048">13</text><text x="2817" y="1048">14</text><text x="2890" y="1048">15</text><text x="2963" y="1048">16</text><text x="3035.500" y="1048">17</text><text x="3108.500" y="1048" fill="#fff" stroke="#fff" stroke-width=".5">18</text>
      <text x="2671.500" y="1112">19</text><text x="2744" y="1112">20</text><text x="2817" y="1112">21</text><text x="2890" y="1112">22</text><text x="2963" y="1112">23</text><text x="3035.500" y="1112">24</text><text x="3108.500" y="1112">25</text>
      <text x="2671.500" y="1176">26</text><text x="2744" y="1176">27</text><text x="2817" y="1176">28</text><text x="2890" y="1176">29</text><text x="2963" y="1176">30</text>
    </g>

    <!-- Weather -->
    <text x="2645.500" y="1308" font-size="23" textLength="194" lengthAdjust="spacingAndGlyphs" fill="#D4D6DB" stroke="#D4D6DB" stroke-width=".7">SAN FRANCISCO</text>
    <text x="2645.500" y="1342" font-size="25" textLength="79" lengthAdjust="spacingAndGlyphs" fill="#C4C7CD">Cloudy</text>
    <text x="2647" y="1440" font-size="97" textLength="206" lengthAdjust="spacingAndGlyphs" fill="#fff" stroke="#fff" stroke-width="2.600">53°F</text>
    <path transform="translate(3071 1283.500) scale(2.667)" d="M17.500 19H9a7 7 0 1 1 6.710-9h1.790a4.500 4.500 0 1 1 0 9Z" fill="none" stroke="#fff" stroke-width="2" stroke-linejoin="round"/>
    <text x="2645.500" y="1680" font-size="23" textLength="109" lengthAdjust="spacingAndGlyphs" fill="#C8CACF">Feels 50°F</text>
    <g fill="none" stroke="#C8CACF" stroke-width="2" stroke-linecap="round" stroke-linejoin="round" transform="translate(2780 1660)"><path d="M17.700 7.700a2.500 2.500 0 1 1 1.800 4.300H2"/><path d="M9.600 4.600A2 2 0 1 1 11 8H2"/><path d="M12.600 19.400A2 2 0 1 0 14 16H2"/></g>
    <text x="2813" y="1680" font-size="23" textLength="63" lengthAdjust="spacingAndGlyphs" fill="#C8CACF">8 mph</text>
    <text x="2902" y="1680" font-size="23" textLength="69.500" lengthAdjust="spacingAndGlyphs" fill="#C8CACF">H 90%</text>

    <!-- Calculator / Timer -->
    <g fill="none" stroke="#4A6FE8" stroke-width="2" stroke-linecap="round" stroke-linejoin="round" transform="translate(2725 1811) scale(1.667)"><rect x="4" y="2" width="16" height="20" rx="2"/><path d="M8 6h8M16 14v4M16 10h.01M12 10h.01M8 10h.01M12 14h.01M8 14h.01M12 18h.01M8 18h.01"/></g>
    <text x="2686" y="1915" font-size="25" class="ink b" textLength="118" lengthAdjust="spacingAndGlyphs">Calculator</text>
    <g fill="none" stroke="#1F9D6C" stroke-width="2" stroke-linecap="round" stroke-linejoin="round" transform="translate(3016 1811) scale(1.667)"><path d="M10 2h4M12 14l3-3"/><circle cx="12" cy="14" r="8"/></g>
    <text x="3002.500" y="1915" font-size="25" class="ink b" textLength="67" lengthAdjust="spacingAndGlyphs">Timer</text>
  </svg>
</div></div>

<!-- window bottom-left corner detail -->
<svg style="position:absolute;left:0;top:0" width="4064" height="2384" viewBox="0 0 4064 2384">
  <path d="M110,2229.500 H128 Q138,2236.500 152,2236.500 V2238 H110Z" fill="#8E8E8E"/>
  <path d="M111.500,2229 H128 Q138,2236.500 152,2236.500" fill="none" stroke="#333" stroke-width="1.200"/>
</svg>
</body></html>
